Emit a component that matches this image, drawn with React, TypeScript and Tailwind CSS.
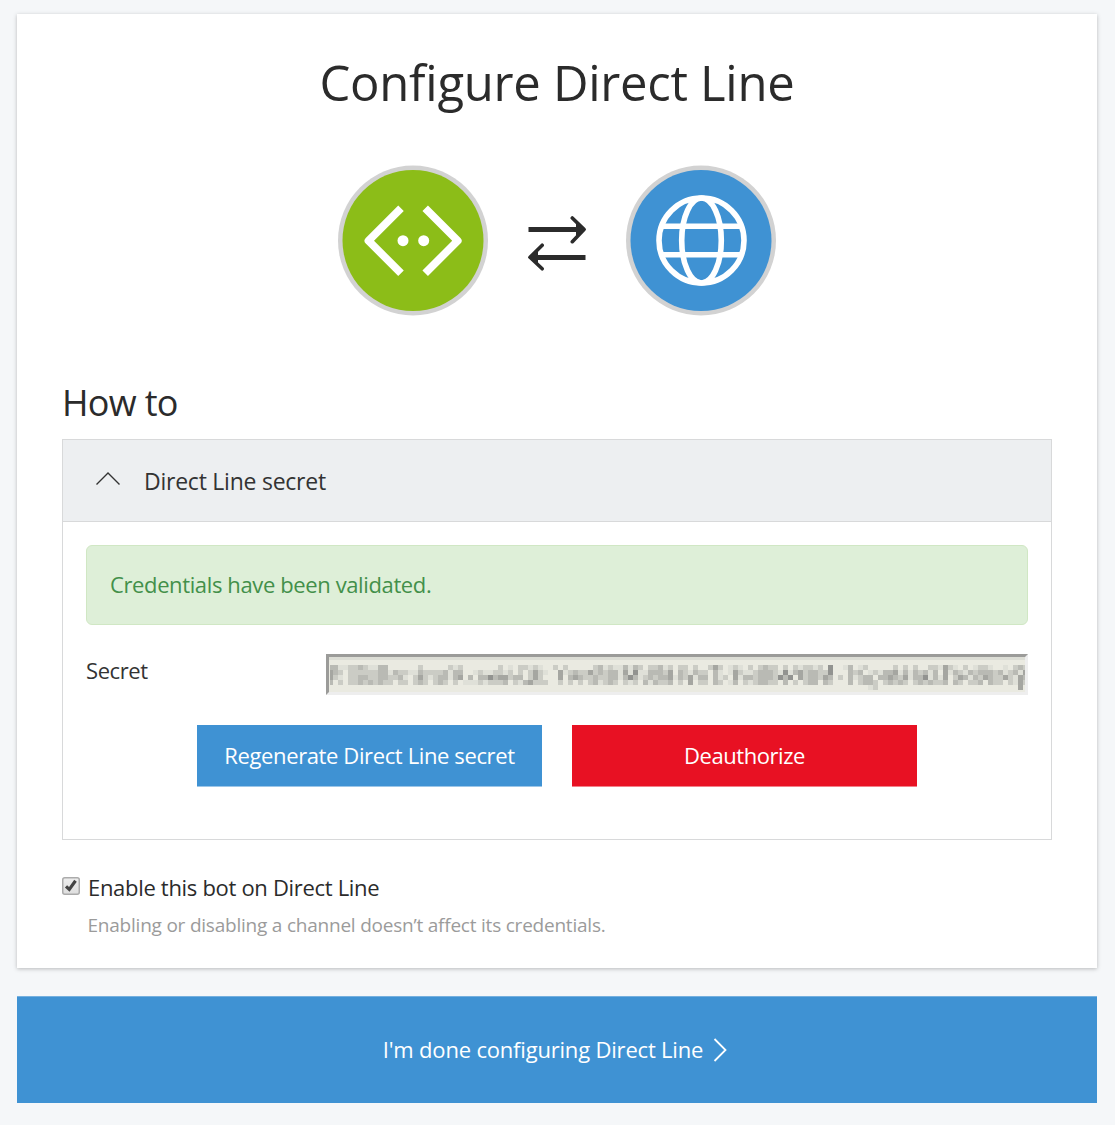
const SHADES = ["", "#dfe0d8", "#cbccc5", "#b9bab4", "#a5a6a1", "#929390"];

// Redacted secret: each digit is the darkness of one 5px cell.
const MOSAIC = [
  "331122321133000000200000212000000020102212100" + "20200000231211313202231202202002420121020232202" + "021221205001301200000202020022142102012210010232",
  "432022222233132211322223133001211221202024210" + "04123224232331415113332403213220310142112333215" + "134233225000323012133413132313041321323332312314",
  "421022332233223102421233134030335344233024200" + "04034322322331353123233413241330312041332333253" + "504233243020312330334324133513140243132432242143",
  "302022323232202202320232020111212223021342220" + "02020202312320212031322302040220320130212332203" + "020233032000302332023232023232230320223032202142",
  "000000000000000000000000000000000000000000000" + "00000000000000000000000000000000000000000000000" + "000000000000000012000000000000000000000000000040",
];

function Mosaic() {
  return (
    <svg className="absolute left-[4px] top-[11px]" width="695" height="25" viewBox="2 0 695 25" shapeRendering="crispEdges">
      {MOSAIC.map((row, y) =>
        row.split("").map((level, x) => {
          const fill = SHADES[Number(level)];
          return fill ? <rect key={`${x}-${y}`} x={x * 5} y={y * 5} width="5" height="5" fill={fill} /> : null;
        })
      )}
    </svg>
  );
}

export default function App() {
  return (
    <div className="h-[1125px] w-[1115px] overflow-hidden bg-[#f5f7f9] px-[17px] pt-[14px] font-['Open_Sans','Noto_Sans',sans-serif] text-[#333]">
      <main className="h-[954px] w-[1080px] bg-white px-[45px] shadow-[0_1px_4px_rgba(0,0,0,0.25)]">
        <h1 className="h-[151px] whitespace-nowrap pt-[34px] text-center text-[49px] font-normal leading-[68px] tracking-[-0.28px] text-[#2b2b2b]">
          <span>Configure Direct Line</span>
        </h1>
        <div className="flex h-[151px] items-start justify-center">
          <svg width="150" height="151" viewBox="0 0 150 151">
            <circle cx="75" cy="75.5" r="75" fill="#d2d2d2" />
            <circle cx="75" cy="75.5" r="70.5" fill="#8cbd18" />
            <g fill="none" stroke="#fff" strokeWidth="7.8" strokeLinejoin="round">
              <path d="M63 43.2 L30.5 75.7 L63 108.3" />
              <path d="M87.2 43.2 L119.7 75.7 L87.2 108.3" />
            </g>
            <circle cx="65" cy="75.7" r="5.5" fill="#fff" />
            <circle cx="85.7" cy="75.7" r="5.5" fill="#fff" />
          </svg>
          <svg className="mx-[39px] mt-[48px]" width="60" height="60" viewBox="527 213 60 60" fill="none" stroke="#2b2b2b">
            <path d="M528.5 229.5 H582 M585.5 257.5 H532" strokeWidth="5" />
            <path d="M572.3 218 L584 229.4 L572.3 241.7 M542.2 245.2 L530 257.3 L542.2 268.8" strokeWidth="3.6" strokeLinecap="round" strokeLinejoin="round" />
            <path d="M576 222.5 L586 229.4 L576 236.5 Z M538 250.5 L528 257.4 L538 264.5 Z" fill="#2b2b2b" stroke="none" />
          </svg>
          <svg width="150" height="151" viewBox="0 0 150 151">
            <circle cx="75" cy="75.5" r="75" fill="#d2d2d2" />
            <circle cx="75" cy="75.5" r="70.5" fill="#3f92d3" />
            <g fill="none" stroke="#fff" strokeWidth="5.6">
              <circle cx="75.5" cy="75.5" r="42.5" />
              <ellipse cx="75.5" cy="75.5" rx="19.8" ry="42.5" />
              <path d="M36 61.2 H115 M36 89.7 H115" />
            </g>
          </svg>
        </div>
        <h2 className="h-[122px] whitespace-nowrap pt-[62px] text-[36px] font-normal leading-[50px] tracking-[-0.7px] text-[#2b2b2b]">
          <span>How to</span>
        </h2>
        <section className="mt-[0.5px] h-[401px] w-[990px] border border-[#d8d9da]">
          <div className="flex h-[82px] items-center border-b border-[#d8d9da] bg-[#edeff1] pl-[32px] pt-[2px]">
            <svg width="26" height="15" viewBox="0 0 26 15" className="-mt-[5px]" fill="none" stroke="#333" strokeWidth="1.4">
              <path d="M1.5 13.5 L13 2 L24.5 13.5" />
            </svg>
            <span className="ml-[23px] whitespace-nowrap text-[23px] tracking-[-0.24px]">Direct Line secret</span>
          </div>
          <div className="px-[23px] pt-[23px]">
            <div className="flex h-[80px] items-center rounded-[6px] border border-[#d0e7c4] bg-[#deefd8] pl-[23px] text-[22px] text-[#43904a]">
              <span className="whitespace-nowrap tracking-[-0.38px]">Credentials have been validated.</span>
            </div>
            <div className="mt-[29px] flex h-[41px]">
              <span className="w-[240px] text-[22px] leading-[33px] tracking-[-0.4px]">Secret</span>
              <div className="relative h-[41px] w-[702px] border-b-[3px] border-l-[3px] border-r-[3px] border-t-[3px] border-b-[#eeeeee] border-l-[#9b9b99] border-r-[#eeeeee] border-t-[#9b9b99] bg-[#eaeae1] shadow-[inset_0_3px_0_#dcddd5]">
                <div className="absolute -left-[3px] -top-[3px]">
                  <Mosaic />
                </div>
              </div>
            </div>
            <div className="mt-[30px] flex justify-center gap-[30px] text-[22px] text-white">
              <button className="h-[62px] w-[345px] whitespace-nowrap border-b border-b-[#9cc6e8] bg-[#3f92d3] tracking-[-0.38px]">
                <span>Regenerate Direct Line secret</span>
              </button>
              <button className="h-[62px] w-[345px] whitespace-nowrap border-b border-b-[#f38089] bg-[#e81123] tracking-[-0.45px]">
                <span>Deauthorize</span>
              </button>
            </div>
          </div>
        </section>
        <div className="mt-[32px] flex items-start">
          <svg className="mt-[5px] shrink-0" width="18" height="19" viewBox="0 0 18 19">
            <defs>
              <linearGradient id="box" x1="0" y1="0" x2="0" y2="1">
                <stop offset="0" stopColor="#eeeeee" />
                <stop offset="1" stopColor="#dedede" />
              </linearGradient>
            </defs>
            <rect x="0.75" y="0.75" width="16.5" height="16.5" rx="2" fill="url(#box)" stroke="#ababab" strokeWidth="1.5" />
            <path d="M4 9.3 L7.3 12.4 L13.5 3.8" fill="none" stroke="#444" strokeWidth="3.2" />
          </svg>
          <div className="-mt-[2px] ml-[8px] whitespace-nowrap">
            <div className="text-[22px] leading-[34px] tracking-[-0.31px] text-[#2b2b2b]"><span>Enable this bot on Direct Line</span></div>
            <div className="-ml-[0.5px] mt-[4px] text-[19px] leading-[34px] tracking-[-0.22px] text-[#9b9b9b]"><span>Enabling or disabling a channel doesn’t affect its credentials.</span></div>
          </div>
        </div>
      </main>
      <button className="mt-[28px] flex h-[107px] w-[1080px] items-center justify-center border-t border-t-[#75b0df] bg-[#3f92d3] pb-[2px] pr-[3px] text-[22px] text-white">
        <span className="whitespace-nowrap tracking-[-0.19px]">I'm done configuring Direct Line</span>
        <svg className="ml-[10px] mt-px" width="15" height="26" viewBox="0 0 15 26" fill="none" stroke="#fff" strokeWidth="1.8">
          <path d="M1.5 2 L12.5 13 L1.5 24" />
        </svg>
      </button>
    </div>
  );
}
